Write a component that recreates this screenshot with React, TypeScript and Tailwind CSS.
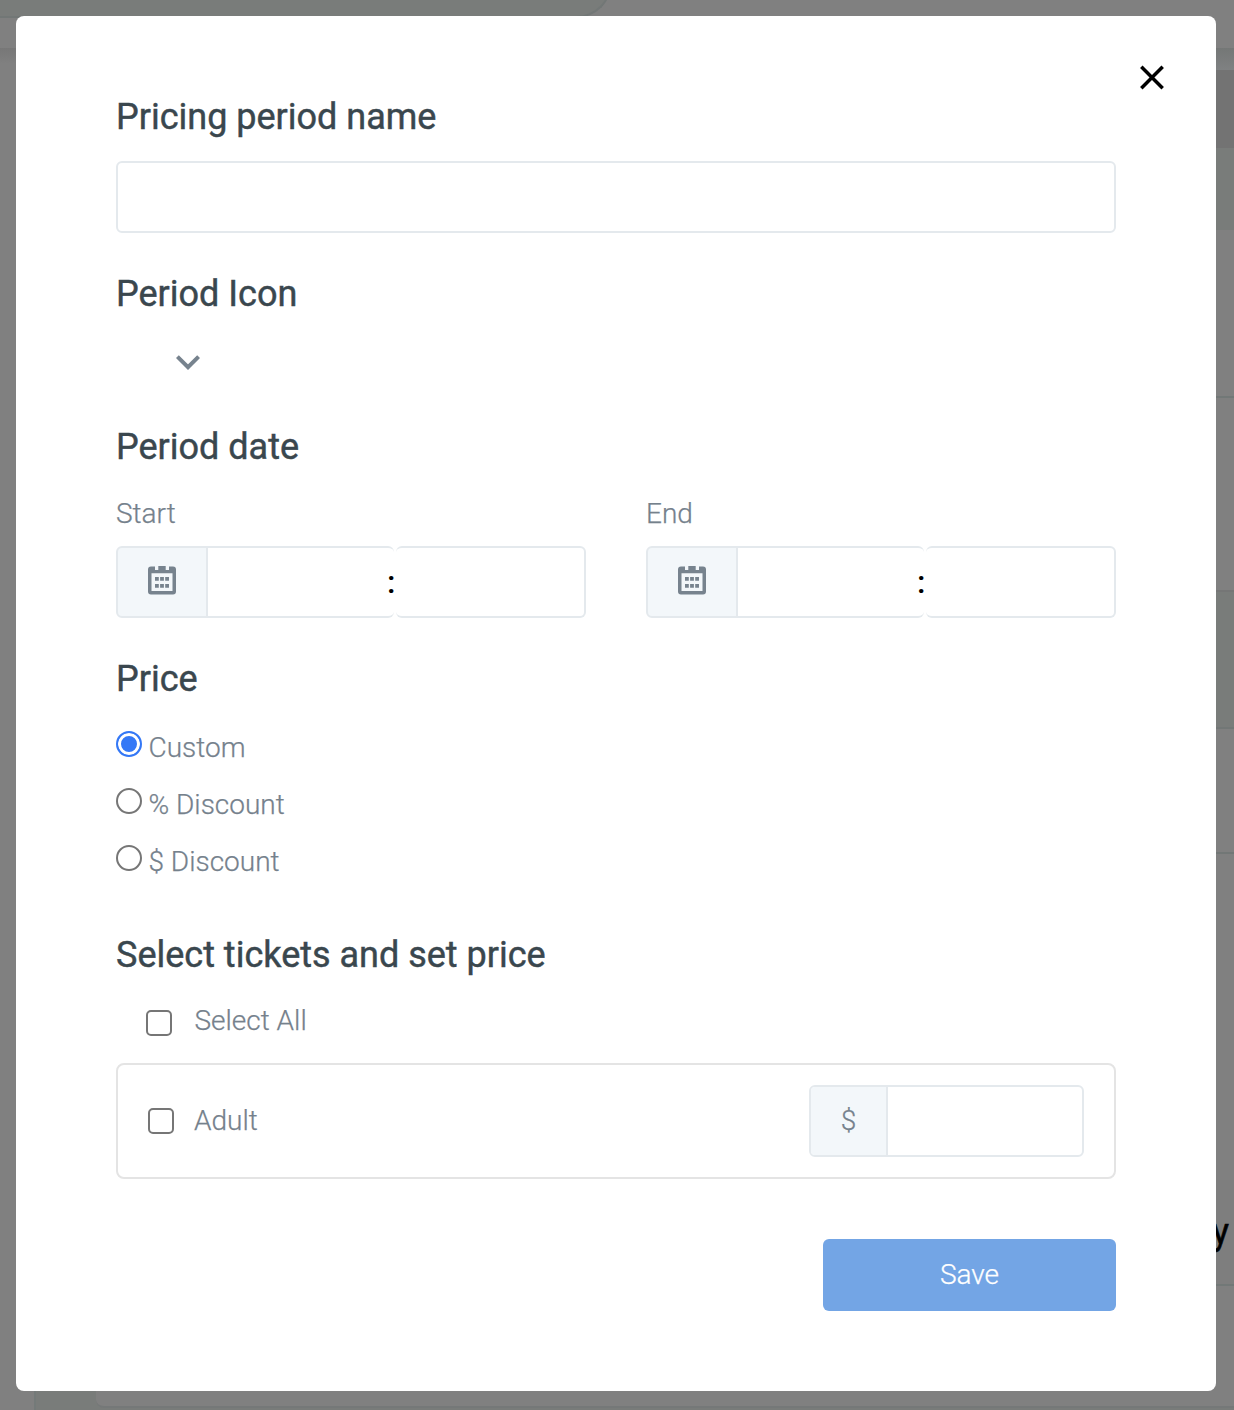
import { useState } from "react";

const priceModes = [
  { id: "custom", label: "Custom" },
  { id: "percent", label: "% Discount" },
  { id: "dollar", label: "$ Discount" },
];

const tickets = [{ id: "adult", label: "Adult" }];

const headingClass = "text-[36px] leading-[42px] font-normal text-[#3a474e] [-webkit-text-stroke:0.45px_#3a474e]";
const labelClass = "text-[28px] leading-[33px] font-light text-[#75818c] [-webkit-text-stroke:0.25px_#75818c]";

function CalendarIcon() {
  return (
    <svg width="28" height="29" viewBox="0 0 28 29" fill="#77838e">
      <path
        fillRule="evenodd"
        d="M3 0.500H7V4H10.300V0H17.700V4H21V0.500H25A3 3 0 0 1 28 3.500V25.500A3 3 0 0 1 25 28.500H3A3 3 0 0 1 0 25.500V3.500A3 3 0 0 1 3 0.500ZM3.500 7.300V25H24.500V7.300Z"
      />
      <path d="M7 11h3.800v3.800H7zM12.100 11h3.800v3.800h-3.800zM17.200 11h3.800v3.800h-3.800zM7 18h3.800v3.800H7zM12.100 18h3.800v3.800h-3.800zM17.200 18h3.800v3.800h-3.800z" />
    </svg>
  );
}

function DateField({ label }: { label: string }) {
  return (
    <div className="w-[470px]">
      <div className={labelClass}>{label}</div>
      <div className="relative mt-4 flex h-[72px]">
        <div className="flex w-[92px] items-center justify-center rounded-l-md border-2 border-[#e4e9ed] bg-[#f3f7fa] pb-1">
          <CalendarIcon />
        </div>
        <input className="w-[186px] rounded-r-md border-y-2 border-[#e4e9ed] outline-none" />
        <input className="ml-[2px] w-[190px] rounded-md border-2 border-l-0 border-[#e4e9ed] outline-none" />
        <span className="absolute top-[17px] left-[271px] text-[32px] leading-[38px] font-medium text-black">:</span>
      </div>
    </div>
  );
}

function Checkbox() {
  return (
    <input
      type="checkbox"
      className="size-[26px] shrink-0 appearance-none rounded-[5px] border-2 border-[#767676] bg-white checked:bg-[#3478f6]"
    />
  );
}

// Dimmed page behind the modal
function Backdrop() {
  return (
    <div className="flex h-[1410px] flex-col bg-[#808080]">
      <div className="-mt-[54px] h-[72px] w-[612px] shrink-0 rounded-br-[36px] border-r-2 border-b-2 border-[#727776] bg-[#797c7a]" />
      <div className="h-[30px] shrink-0" />
      <div className="flex flex-1 justify-between">
        <div className="flex w-[300px] flex-col">
          <div className="h-4 bg-gradient-to-b from-[#777777] to-[#808080]" />
          <div className="flex-1" />
          <div className="flex h-[60px]">
            <div className="w-9 border-r-2 border-[#747a79]" />
            <div className="flex-1 bg-[#797c7a]" />
          </div>
        </div>
        <div className="flex w-[100px] flex-col">
          <div className="h-[22px] bg-gradient-to-b from-[#747776] to-[#7f8182]" />
          <div className="h-[78px] bg-[#737373]" />
          <div className="h-[82px] bg-[#797c7a]" />
          <div className="h-[168px] border-b-2 border-[#727877]" />
          <div className="h-[194px] border-b-2 border-[#757676]" />
          <div className="h-[137px] border-b-2 border-[#727776] bg-[#797c7a]" />
          <div className="h-[125px] border-b-2 border-[#727776]" />
          <div className="h-[326px]" />
          <div className="h-[106px] border-b-2 border-[#727877] bg-[#7e7e7e] pt-[31px] pr-[5px] text-right text-[36px] leading-[42px] text-black [-webkit-text-stroke:0.5px_#000]">
            y
          </div>
        </div>
      </div>
      <div className="-mt-[22px] flex h-[22px]">
        <div className="w-9 shrink-0 border-r-2 border-[#747a79]" />
        <div className="flex-1 bg-[#797c7a] pl-[60px]">
          <div className="h-5 rounded-bl-lg border-b-2 border-[#757878] bg-[#808080]" />
        </div>
      </div>
    </div>
  );
}

export default function App() {
  const [mode, setMode] = useState("custom");

  return (
    <div className="relative flow-root h-[1410px] w-[1234px] overflow-hidden font-['Roboto',sans-serif]">
      <Backdrop />

      <div className="absolute top-4 left-4 h-[1375px] w-[1200px] rounded-lg bg-white px-[100px] pt-20">
        <button className="absolute top-[49px] right-[52px]" aria-label="Close">
          <svg width="24" height="25" viewBox="0 0 24 25" stroke="#000" strokeWidth="3.500">
            <path d="M1.300 1.800L22.700 23.200M22.700 1.800L1.300 23.200" />
          </svg>
        </button>

        <h2 className={headingClass}>Pricing period name</h2>
        <input className="mt-[23px] block h-[72px] w-full rounded-md border-2 border-[#e4e9ed] px-4 outline-none" />

        <h2 className={`mt-10 ${headingClass}`}>Period Icon</h2>
        <div className="mt-10 ml-[60px] h-4">
          <svg width="24" height="16" viewBox="0 0 24 16" fill="none" stroke="#77838e" strokeWidth="4">
            <path d="M1.400 1.600L12 12.200L22.600 1.600" />
          </svg>
        </div>

        {/* Period date */}
        <h2 className={`mt-[55px] ${headingClass}`}>Period date</h2>
        <div className="mt-[29px] flex justify-between">
          <DateField label="Start" />
          <DateField label="End" />
        </div>

        {/* Price */}
        <h2 className={`mt-10 ${headingClass}`}>Price</h2>
        <div className="mt-[31px] flex flex-col gap-6">
          {priceModes.map((item) => (
            <label key={item.id} className={`flex items-start gap-[6.5px] ${labelClass}`}>
              <input
                type="radio"
                name="price"
                checked={mode === item.id}
                onChange={() => setMode(item.id)}
                className="size-[26px] appearance-none rounded-full border-2 border-[#767676] bg-white checked:border-[#3478f6] checked:bg-[#3478f6] checked:shadow-[inset_0_0_0_3px_#fff]"
              />
              {item.label}
            </label>
          ))}
        </div>

        {/* Tickets */}
        <h2 className={`mt-[56px] ${headingClass}`}>Select tickets and set price</h2>
        <label className={`mt-7 ml-[30px] flex items-start ${labelClass}`}>
          <span className="mt-[6px] flex">
            <Checkbox />
          </span>
          <span className="ml-[22.5px]">Select All</span>
        </label>
        {tickets.map((ticket) => (
          <div
            key={ticket.id}
            className="mt-[26px] flex h-[116px] items-center justify-between rounded-lg border-2 border-[#e4e4e4] px-[30px]"
          >
            <label className={`flex items-center gap-5 ${labelClass}`}>
              <Checkbox />
              <span className="pb-[2px]">{ticket.label}</span>
            </label>
            <div className="flex h-[72px] w-[275px] overflow-hidden rounded-md border-2 border-[#e4e9ed]">
              <div className={`flex w-[77px] items-center justify-center border-r-2 border-[#e4e9ed] bg-[#f3f7fa] pb-[2px] ${labelClass}`}>
                $
              </div>
              <input className="min-w-0 flex-1 outline-none" />
            </div>
          </div>
        ))}

        <button className="mt-[60px] ml-auto block h-[72px] w-[293px] rounded-md bg-[#73a5e5] text-[28px] font-light text-white [-webkit-text-stroke:0.25px_#fff]">
          Save
        </button>
      </div>
    </div>
  );
}
